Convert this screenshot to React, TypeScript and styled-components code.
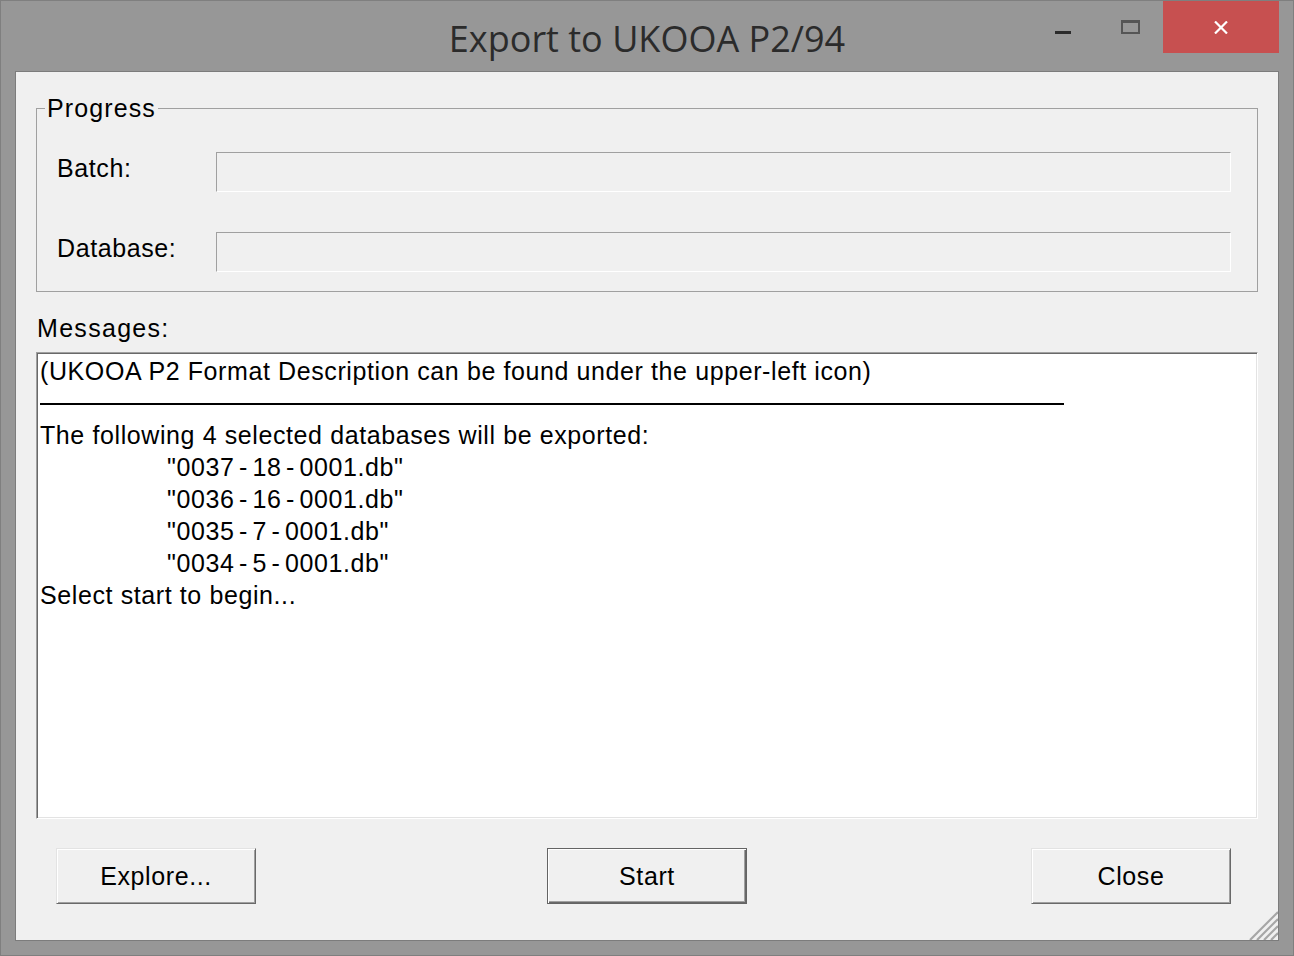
import React from "react";
import styled, { createGlobalStyle, css } from "styled-components";

const GlobalStyle = createGlobalStyle`
  html, body {
    margin: 0;
    padding: 0;
    background: #979797;
  }
  body {
    font-family: "Liberation Sans", Arial, sans-serif;
  }
  * {
    box-sizing: border-box;
  }
`;

const Window = styled.div`
  width: 1294px;
  height: 956px;
  display: flex;
  flex-direction: column;
  background: #979797;
  border: 1px solid #7f7f7f;
  padding: 0 14px 14px;
`;

const TitleBar = styled.header`
  height: 70px;
  display: grid;
  grid-template-columns: 1fr auto 1fr;
  align-items: start;
`;

const Title = styled.h1`
  grid-column: 2;
  margin: 0;
  padding-top: 3px;
  font-family: "Open Sans", "Noto Sans", sans-serif;
  font-weight: 400;
  font-size: 36px;
  line-height: 70px;
  color: #2b2b2b;
  white-space: nowrap;
`;

const Controls = styled.div`
  grid-column: 3;
  justify-self: end;
  display: flex;
  height: 52px;
`;

const ControlButton = styled.div<{ $close?: boolean }>`
  width: ${(p) => (p.$close ? "116px" : "66px")};
  height: 52px;
  display: flex;
  align-items: center;
  justify-content: center;
  background: ${(p) => (p.$close ? "#c75050" : "transparent")};
`;

const MinGlyph = styled.span`
  width: 16px;
  height: 3px;
  margin: 11px 2px 0 0;
  background: #2b2b2b;
`;

const MaxGlyph = styled.span`
  width: 19px;
  height: 14px;
  border: 2px solid #555;
  border-top-width: 3px;
`;

const Client = styled.main`
  position: relative;
  flex: 1;
  display: flex;
  flex-direction: column;
  background: #f0f0f0;
  border: 1px solid #7c7c7c;
  font-size: 25px;
  letter-spacing: 0.6px;
  color: #000;
`;

const GroupBox = styled.fieldset`
  margin: 22px 20px 0;
  padding: 0;
  min-width: 0;
  border: 1px solid #a0a0a0;
`;

const GroupLegend = styled.legend`
  margin-left: 8px;
  padding: 0 2px;
  line-height: 28px;
  letter-spacing: 1.1px;
`;

const FieldGrid = styled.div`
  display: grid;
  grid-template-columns: 159px 1fr;
  row-gap: 40px;
  align-items: center;
  padding: 30px 26px 19px 20px;
`;

const FieldLabel = styled.span`
  padding-bottom: 8px;
  line-height: 28px;
`;

const ProgressField = styled.div`
  height: 40px;
  background: #f0f0f0;
  border: 1px solid;
  border-color: #a0a0a0 #fff #fff #a0a0a0;
`;

const SectionLabel = styled.div`
  margin: 22px 20px 10px 21px;
  line-height: 28px;
  letter-spacing: 1.3px;
`;

const MessageBox = styled.div`
  margin: 0 20px;
  height: 467px;
  padding: 2px 3px;
  background: #fff;
  border: 1px solid;
  border-color: #a0a0a0 #fff #fff #a0a0a0;
  box-shadow: inset 1px 1px 0 #696969, inset -1px -1px 0 #e3e3e3;
  overflow: hidden;
  line-height: 32px;
`;

const MessageLine = styled.div<{ $indent?: boolean }>`
  white-space: pre;
  ${(p) =>
    p.$indent &&
    css`
      padding-left: 127px;
      word-spacing: -3px;
    `}
`;

const RuleLine = styled.div`
  height: 32px;
  display: flex;
  align-items: center;
  &::after {
    content: "";
    width: 1024px;
    height: 2px;
    margin-top: 1px;
    background: #000;
  }
`;

const ButtonRow = styled.div`
  display: grid;
  grid-template-columns: 1fr auto 1fr;
  align-items: center;
  margin-top: 29px;
`;

const DialogButton = styled.button<{ $default?: boolean; $align: "start" | "center" | "end" }>`
  width: 200px;
  height: 56px;
  padding: 0;
  font: inherit;
  letter-spacing: inherit;
  color: #000;
  background: #f0f0f0;
  justify-self: ${(p) => p.$align};
  margin: ${(p) =>
    p.$align === "start" ? "0 0 0 40px" : p.$align === "end" ? "0 47px 0 0" : "0"};
  border: 1px solid;
  border-color: #e3e3e3 #696969 #696969 #e3e3e3;
  box-shadow: inset 1px 1px 0 #fff, inset -1px -1px 0 #a0a0a0;
  ${(p) =>
    p.$default &&
    css`
      border-color: #646464;
      box-shadow: inset 1px 1px 0 #fff, inset -1px -1px 0 #696969,
        inset -2px -2px 0 #a0a0a0;
    `}
`;

const Grip = styled.svg`
  position: absolute;
  right: 0;
  bottom: 0;
`;

const files = [
  '"0037 - 18 - 0001.db"',
  '"0036 - 16 - 0001.db"',
  '"0035 - 7 - 0001.db"',
  '"0034 - 5 - 0001.db"',
];

export default function App() {
  return (
    <>
      <GlobalStyle />
      <Window>
        <TitleBar>
          <Title>Export to UKOOA P2/94</Title>
          <Controls>
            <ControlButton>
              <MinGlyph />
            </ControlButton>
            <ControlButton>
              <MaxGlyph />
            </ControlButton>
            <ControlButton $close>
              <svg width="14" height="13" viewBox="0 0 14 13">
                <path d="M1 0.5 L13 12.5 M13 0.5 L1 12.5" stroke="#fff" strokeWidth="2.2" fill="none" />
              </svg>
            </ControlButton>
          </Controls>
        </TitleBar>
        <Client>
          <GroupBox>
            <GroupLegend>Progress</GroupLegend>
            <FieldGrid>
              <FieldLabel>Batch:</FieldLabel>
              <ProgressField />
              <FieldLabel>Database:</FieldLabel>
              <ProgressField />
            </FieldGrid>
          </GroupBox>
          <SectionLabel>Messages:</SectionLabel>
          <MessageBox>
            <MessageLine>(UKOOA P2 Format Description can be found under the upper-left icon)</MessageLine>
            <RuleLine />
            <MessageLine>The following 4 selected databases will be exported:</MessageLine>
            {files.map((f) => (
              <MessageLine key={f} $indent>
                {f}
              </MessageLine>
            ))}
            <MessageLine>Select start to begin...</MessageLine>
          </MessageBox>
          <ButtonRow>
            <DialogButton $align="start">Explore...</DialogButton>
            <DialogButton $align="center" $default>
              Start
            </DialogButton>
            <DialogButton $align="end">Close</DialogButton>
          </ButtonRow>
          <Grip width="34" height="34" viewBox="0 0 34 34">
            {[6, 13, 20, 27].map((d) => (
              <path key={d} d={`M${d} 34 L34 ${d}`} stroke="#a6a6a6" strokeWidth="2.2" />
            ))}
          </Grip>
        </Client>
      </Window>
    </>
  );
}
